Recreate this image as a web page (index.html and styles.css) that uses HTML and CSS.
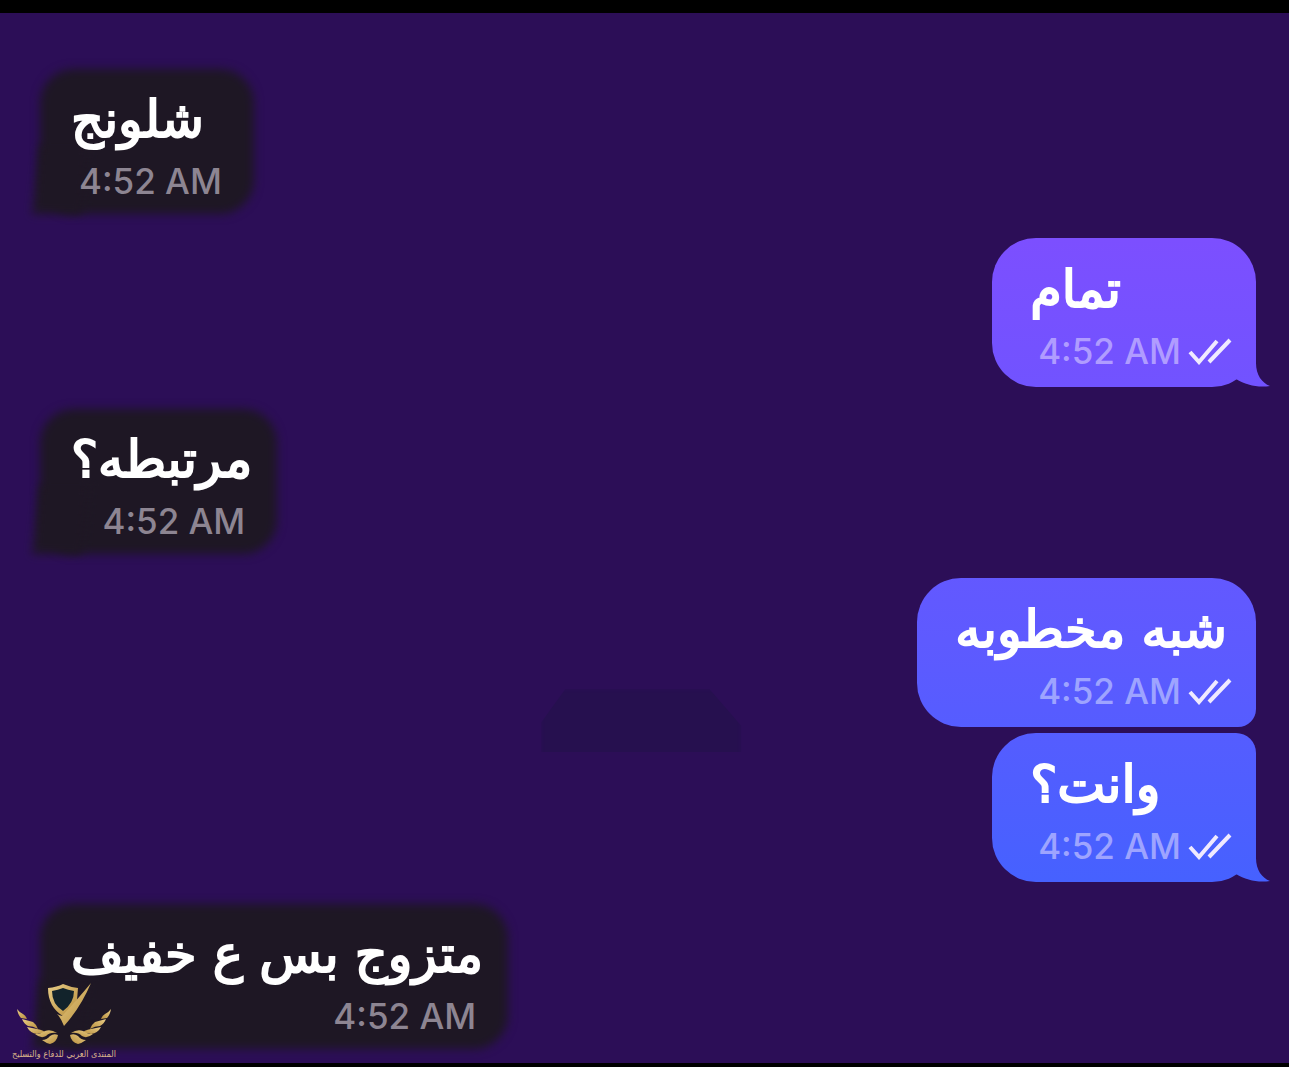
FILE: index.html
```html
<!DOCTYPE html>
<html lang="ar">
<head>
  <meta charset="UTF-8" />
  <meta name="viewport" content="width=device-width, initial-scale=1.0"/>
  <title>المحادثة</title>
  <link rel="stylesheet" href="styles.css">
</head>
<body>
  <svg width="0" height="0" class="defs" aria-hidden="true">
    <defs>
      <symbol id="ticks" viewBox="0 0 44 28">
        <path d="M2 15 L11 25 L29 4 M21 25 L42 3" />
      </symbol>
    </defs>
  </svg>

  <main class="chat">
    <div class="smudge"></div>

    <div class="message in">
      <p class="text" dir="rtl">شلونج</p>
      <div class="meta"><time>4:52 AM</time></div>
    </div>

    <div class="message out tail">
      <p class="text" dir="rtl">تمام</p>
      <div class="meta"><time>4:52 AM</time><svg class="ticks"><use href="#ticks"/></svg></div>
    </div>

    <div class="message in">
      <p class="text" dir="rtl">مرتبطه؟</p>
      <div class="meta"><time>4:52 AM</time></div>
    </div>

    <div class="message out first">
      <p class="text" dir="rtl">شبه مخطوبه</p>
      <div class="meta"><time>4:52 AM</time><svg class="ticks"><use href="#ticks"/></svg></div>
    </div>

    <div class="message out tail last">
      <p class="text" dir="rtl">وانت؟</p>
      <div class="meta"><time>4:52 AM</time><svg class="ticks"><use href="#ticks"/></svg></div>
    </div>

    <div class="message in">
      <p class="text" dir="rtl">متزوج بس ع خفيف</p>
      <div class="meta"><time>4:52 AM</time></div>
    </div>

    <div class="watermark">
      <svg viewBox="0 0 96 62" class="logo" aria-hidden="true">
        <defs>
          <linearGradient id="gold" x1="0" y1="0" x2="1" y2="1">
            <stop offset="0" stop-color="#e8cc86"/>
            <stop offset="1" stop-color="#b88f3d"/>
          </linearGradient>
          <g id="wing">
            <path d="M1 26 Q4 30 7 31 Q10 33 11 36 L5 35 Q2 32 1 26Z"/>
            <path d="M6 36 L17 39 Q21 42 22 46 Q17 43 12 43 Q8 41 6 36Z"/>
            <path d="M11 44 L21 46 Q28 47 31 51 Q25 49 21 51 Q14 50 11 44Z"/>
            <path d="M19 51 Q25 51 29 48 Q35 46 41 50 Q34 49 30 53 Q25 56 19 51Z"/>
            <path d="M26 57 Q31 57 34 53 Q38 50 42 52 Q41 59 34 61 Q30 60 26 57Z"/>
          </g>
        </defs>
        <path d="M34 6 L48 3 L61 6 Q62 22 48 30 Q34 22 34 6Z" fill="#12232b"/>
        <g fill="url(#gold)">
          <path fill-rule="evenodd" d="M32 5 Q41 4 47 1 Q54 4 62 5 L61 17 L53 29 L47 33 Q32 24 32 5Z M36 8 Q36 21 47 28 Q58 20 58 8 Q52 7 47 5 Q42 7 36 8Z"/>
          <path d="M41 31 Q46 34 47 32 Q60 18 75 0 Q65 24 48 43 Q45 35 41 31Z"/>
          <use href="#wing"/>
          <use href="#wing" transform="translate(96 0) scale(-1 1)"/>
        </g>
      </svg>
      <span class="watermark-text" dir="rtl">المنتدى العربي للدفاع والتسليح</span>
    </div>
  </main>
</body>
</html>
```
FILE: styles.css
```css
body {
  margin: 0;
  background: #000;
  color: #fff;
}

.defs {
  position: absolute;
}

.chat {
  position: relative;
  box-sizing: border-box;
  min-height: calc(100vh - 17px);
  margin: 13px 0 4px;
  padding: 55px 33px 11px 40px;
  display: flex;
  flex-direction: column;
  gap: 21px;
  background: #2c0e57;
  overflow: hidden;
}

.message {
  position: relative;
  box-sizing: border-box;
  padding: 18px 24px 9px 38px;
  z-index: 1;
}

.text {
  margin: 0;
  padding-right: 5px;
  font: 51px/68px "DejaVu Sans", sans-serif;
  text-align: left;
  -webkit-text-stroke: 2px #fff;
}

.meta {
  display: flex;
  justify-content: flex-end;
  align-items: center;
  gap: 7px;
  padding-left: 8px;
  font: 500 35px/54px Inter, sans-serif;
}

/* received */
.in {
  align-self: flex-start;
  padding-left: 31px;
  padding-right: 25px;
}

.in .text {
  padding-right: 0;
}

.in .meta {
  padding-right: 7px;
  color: #8d8592;
}

.in::before,
.in::after {
  content: "";
  position: absolute;
  z-index: -1;
  background: #1e1724;
  filter: blur(5px);
}

.in::before {
  inset: 1px 0 3px;
  border-radius: 34px;
}

.in::after {
  left: -4px;
  bottom: 3px;
  width: 50px;
  height: 70px;
  transform: skewX(-6deg);
}

/* sent, one gradient runs through all of them */
.out {
  align-self: flex-end;
  border-radius: 44px;
}

.out,
.tail::after {
  background: linear-gradient(#7c4fff 240px, #5e5aff 640px, #4661ff 880px) fixed;
}

.out .meta {
  color: #b09cff;
}

.out.first .meta,
.out.last .meta {
  color: #9ea4ff;
}

.out.first {
  border-bottom-right-radius: 18px;
}

.out.last {
  margin-top: -15px;
  border-top-right-radius: 20px;
}

.tail::after {
  content: "";
  position: absolute;
  z-index: -1;
  right: -14px;
  bottom: 0;
  width: 44px;
  height: 44px;
  clip-path: path("M30 0 V20 C30 32 36 40 44 43 C32 45 20 42 10 36 L0 20 Z");
}

.ticks {
  width: 44px;
  height: 28px;
  fill: none;
  stroke: #f0eaff;
  stroke-width: 4;
}

.smudge {
  position: absolute;
  left: 42%;
  top: 676px;
  width: 200px;
  height: 74px;
  background: #26104f;
  clip-path: polygon(12% 0, 84% 0, 100% 50%, 100% 85%, 0 85%, 0 45%);
  filter: blur(2px);
}

.watermark {
  position: absolute;
  z-index: 2;
  left: 12px;
  bottom: 0;
  display: flex;
  flex-direction: column;
  align-items: center;
}

.logo {
  width: 96px;
  height: 62px;
}

.watermark-text {
  font: 9px/18px "DejaVu Sans Condensed", "DejaVu Sans", sans-serif;
  color: #d9b58a;
  white-space: nowrap;
}
```
